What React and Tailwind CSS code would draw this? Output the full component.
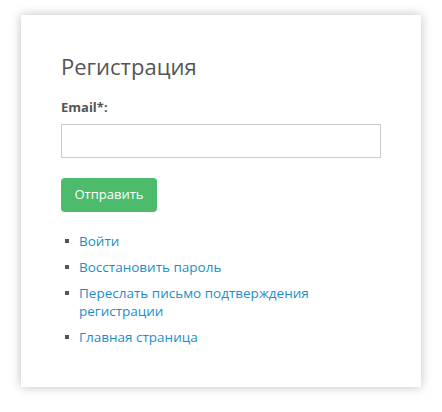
export default function App() {
  return (
    <div className="min-h-[412px] bg-white pt-[15px] pl-[21px]" style={{ fontFamily: '"Open Sans", "Noto Sans", sans-serif' }}>
      <div className="w-[400px] h-[372px] bg-white shadow-[0_0_10px_rgba(0,0,0,0.25)] px-10 pt-[36px]">
        <h1 className="text-[22px] leading-[30px] text-[#555] font-normal">Регистрация</h1>
        <label className="block mt-[17px] text-[13px] leading-[18px] font-bold text-[#555]">Email*:</label>
        <input type="text" className="mt-[8px] block w-[320px] h-[34px] border border-[#ccc] bg-white outline-none" />
        <button className="mt-[20px] block h-[34px] w-[96px] rounded-[4px] bg-[#4dbb6c] text-white text-[13px] font-medium">Отправить</button>
        <ul className="mt-[20px] text-[13.5px] leading-[18px] text-[#1a8fc7]">
          {[
            'Войти',
            'Восстановить пароль',
            'Переслать письмо подтверждения регистрации',
            'Главная страница',
          ].map((t) => (
            <li key={t} className="flex items-start mb-[8px]">
              <span className="mt-[7px] ml-[4px] mr-[10px] w-[4px] h-[4px] bg-[#555] shrink-0" />
              <a href="#" className="w-[240px]">{t}</a>
            </li>
          ))}
        </ul>
      </div>
    </div>
  );
}
